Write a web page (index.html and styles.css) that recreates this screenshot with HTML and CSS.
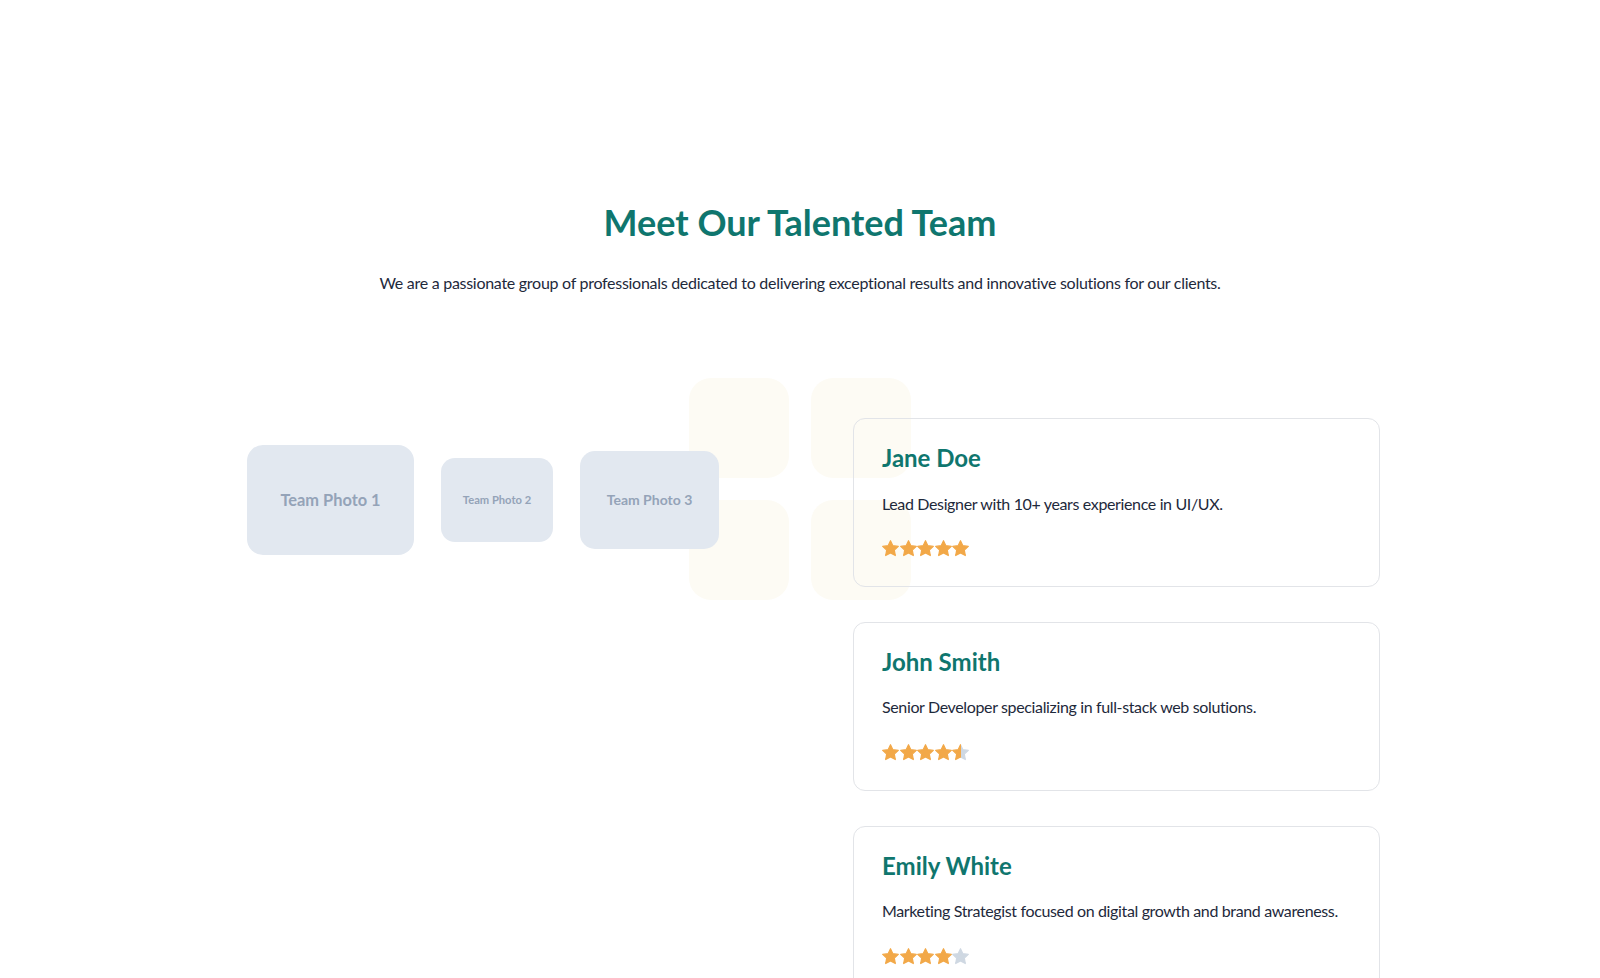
FILE: index.html
```html
<!DOCTYPE html>
<html lang="en">
<head>
<meta charset="utf-8">
<title>Meet Our Talented Team</title>
<link rel="stylesheet" href="styles.css">
</head>
<body>
<svg width="0" height="0" class="defs" aria-hidden="true">
  <defs>
    <linearGradient id="halfStar" x1="0" x2="1" y1="0" y2="0">
      <stop offset="50%" stop-color="#f2a848"/>
      <stop offset="50%" stop-color="#cfd8e2"/>
    </linearGradient>
  </defs>
</svg>
<section class="team-section">
  <h1 class="title">Meet Our Talented Team</h1>
  <p class="subtitle">We are a passionate group of professionals dedicated to delivering exceptional results and innovative solutions for our clients.</p>

  <div class="team">
    <div class="decor" aria-hidden="true">
      <span></span><span></span><span></span><span></span>
    </div>

    <div class="gallery">
      <div class="photo photo-1">Team Photo 1</div>
      <div class="photo photo-2">Team Photo 2</div>
      <div class="photo photo-3">Team Photo 3</div>
    </div>

    <div class="cards">
      <article class="card">
        <h2 class="name">Jane Doe</h2>
        <p class="desc">Lead Designer with 10+ years experience in UI/UX.</p>
        <div class="stars">
          <svg class="star full" viewBox="2 2 20 20"><path d="M12 2.8l2.8 5.9 6.4.8-4.7 4.4 1.2 6.4L12 17.2l-5.7 3.1 1.2-6.4-4.7-4.4 6.4-.8z"/></svg>
          <svg class="star full" viewBox="2 2 20 20"><path d="M12 2.8l2.8 5.9 6.4.8-4.7 4.4 1.2 6.4L12 17.2l-5.7 3.1 1.2-6.4-4.7-4.4 6.4-.8z"/></svg>
          <svg class="star full" viewBox="2 2 20 20"><path d="M12 2.8l2.8 5.9 6.4.8-4.7 4.4 1.2 6.4L12 17.2l-5.7 3.1 1.2-6.4-4.7-4.4 6.4-.8z"/></svg>
          <svg class="star full" viewBox="2 2 20 20"><path d="M12 2.8l2.8 5.9 6.4.8-4.7 4.4 1.2 6.4L12 17.2l-5.7 3.1 1.2-6.4-4.7-4.4 6.4-.8z"/></svg>
          <svg class="star full" viewBox="2 2 20 20"><path d="M12 2.8l2.8 5.9 6.4.8-4.7 4.4 1.2 6.4L12 17.2l-5.7 3.1 1.2-6.4-4.7-4.4 6.4-.8z"/></svg>
        </div>
      </article>

      <article class="card">
        <h2 class="name">John Smith</h2>
        <p class="desc">Senior Developer specializing in full-stack web solutions.</p>
        <div class="stars">
          <svg class="star full" viewBox="2 2 20 20"><path d="M12 2.8l2.8 5.9 6.4.8-4.7 4.4 1.2 6.4L12 17.2l-5.7 3.1 1.2-6.4-4.7-4.4 6.4-.8z"/></svg>
          <svg class="star full" viewBox="2 2 20 20"><path d="M12 2.8l2.8 5.9 6.4.8-4.7 4.4 1.2 6.4L12 17.2l-5.7 3.1 1.2-6.4-4.7-4.4 6.4-.8z"/></svg>
          <svg class="star full" viewBox="2 2 20 20"><path d="M12 2.8l2.8 5.9 6.4.8-4.7 4.4 1.2 6.4L12 17.2l-5.7 3.1 1.2-6.4-4.7-4.4 6.4-.8z"/></svg>
          <svg class="star full" viewBox="2 2 20 20"><path d="M12 2.8l2.8 5.9 6.4.8-4.7 4.4 1.2 6.4L12 17.2l-5.7 3.1 1.2-6.4-4.7-4.4 6.4-.8z"/></svg>
          <svg class="star half" viewBox="2 2 20 20"><path d="M12 2.8l2.8 5.9 6.4.8-4.7 4.4 1.2 6.4L12 17.2l-5.7 3.1 1.2-6.4-4.7-4.4 6.4-.8z"/></svg>
        </div>
      </article>

      <article class="card">
        <h2 class="name">Emily White</h2>
        <p class="desc">Marketing Strategist focused on digital growth and brand awareness.</p>
        <div class="stars">
          <svg class="star full" viewBox="2 2 20 20"><path d="M12 2.8l2.8 5.9 6.4.8-4.7 4.4 1.2 6.4L12 17.2l-5.7 3.1 1.2-6.4-4.7-4.4 6.4-.8z"/></svg>
          <svg class="star full" viewBox="2 2 20 20"><path d="M12 2.8l2.8 5.9 6.4.8-4.7 4.4 1.2 6.4L12 17.2l-5.7 3.1 1.2-6.4-4.7-4.4 6.4-.8z"/></svg>
          <svg class="star full" viewBox="2 2 20 20"><path d="M12 2.8l2.8 5.9 6.4.8-4.7 4.4 1.2 6.4L12 17.2l-5.7 3.1 1.2-6.4-4.7-4.4 6.4-.8z"/></svg>
          <svg class="star full" viewBox="2 2 20 20"><path d="M12 2.8l2.8 5.9 6.4.8-4.7 4.4 1.2 6.4L12 17.2l-5.7 3.1 1.2-6.4-4.7-4.4 6.4-.8z"/></svg>
          <svg class="star empty" viewBox="2 2 20 20"><path d="M12 2.8l2.8 5.9 6.4.8-4.7 4.4 1.2 6.4L12 17.2l-5.7 3.1 1.2-6.4-4.7-4.4 6.4-.8z"/></svg>
        </div>
      </article>
    </div>
  </div>
</section>
</body>
</html>
```

FILE: styles.css
```css
* { box-sizing: border-box; }

html, body {
  margin: 0;
  padding: 0;
  background: #ffffff;
}

body {
  font-family: Lato, "Noto Sans", "Liberation Sans", sans-serif;
  color: #1e293b;
}

.defs {
  position: absolute;
  width: 0;
  height: 0;
}

.team-section {
  padding-top: 201px;
}

.title {
  margin: 0 0 26px;
  text-align: center;
  font-size: 36px;
  line-height: 1.2;
  font-weight: 700;
  color: #0f766e;
  letter-spacing: 0;
}

.subtitle {
  margin: 0 0 122px;
  text-align: center;
  font-size: 16px;
  line-height: 1.6;
  color: #1e293b;
  letter-spacing: -0.28px;
}

.team {
  position: relative;
  width: 1160px;
  margin: 0 auto;
  display: flex;
  align-items: flex-start;
}

.decor {
  position: absolute;
  left: 469px;
  top: -40px;
  display: grid;
  grid-template-columns: 100px 100px;
  grid-template-rows: 100px 100px;
  gap: 22px;
  z-index: 0;
}

.decor span {
  background: #fdfbf4;
  border-radius: 22px;
}

.gallery {
  position: relative;
  z-index: 1;
  flex: 1;
  height: 164px;
  display: flex;
  align-items: center;
  gap: 27px;
  padding-left: 27px;
}

.photo {
  display: flex;
  align-items: center;
  justify-content: center;
  background: #e2e8f0;
  color: #94a3b8;
  font-family: Lato, sans-serif;
  font-weight: 700;
}

.photo-1 {
  width: 167px;
  height: 110px;
  border-radius: 16px;
  font-size: 16.4px;
}

.photo-2 {
  width: 112px;
  height: 84px;
  border-radius: 14px;
  font-size: 11.2px;
}

.photo-3 {
  width: 139px;
  height: 98px;
  border-radius: 15px;
  font-size: 14px;
}

.cards {
  position: relative;
  z-index: 1;
  width: 527px;
  display: flex;
  flex-direction: column;
  gap: 35px;
}

.card {
  border: 1px solid #e2e4e8;
  border-radius: 12px;
  padding: 25px 20px 28.5px 28px;
  background: transparent;
}

.name {
  margin: 0 0 18px;
  font-size: 24px;
  line-height: 1.2;
  font-weight: 700;
  color: #0f766e;
}

.desc {
  margin: 0 0 24px;
  font-size: 16px;
  line-height: 1.6;
  color: #1e293b;
  letter-spacing: -0.36px;
  white-space: nowrap;
}

.stars {
  display: flex;
  gap: 0.5px;
  height: 17px;
}

.star {
  width: 17px;
  height: 17px;
}

.star path {
  stroke-width: 1.4;
  stroke-linejoin: round;
}

.star.full path {
  fill: #f2a848;
  stroke: #f2a848;
}

.star.empty path {
  fill: #cfd8e2;
  stroke: #cfd8e2;
}

.star.half path {
  fill: url(#halfStar);
  stroke: url(#halfStar);
}
```
